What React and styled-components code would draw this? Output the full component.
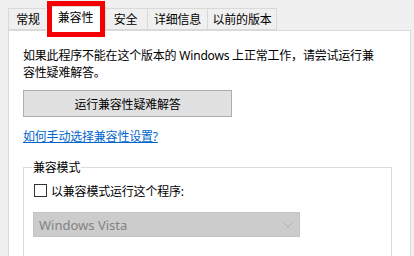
import React from "react";
import styled, { createGlobalStyle } from "styled-components";

const GlobalStyle = createGlobalStyle`
  body {
    margin: 0;
    background: #f0f0f0;
    font-family: "Noto Sans", "Noto Sans CJK SC", sans-serif;
    font-size: 12px;
    letter-spacing: -0.2px;
    color: #000;
  }
`;

const Window = styled.div`
  width: 414px;
  height: 256px;
  overflow: hidden;
  padding-top: 8px;
  box-sizing: border-box;
`;

const TabStrip = styled.div`
  display: flex;
  align-items: flex-end;
  height: 22px;
  margin-left: 8px;
`;

const Tab = styled.div`
  position: relative;
  box-sizing: border-box;
  width: ${(p) => p.w}px;
  height: ${(p) => (p.active ? 25 : 22)}px;
  margin: ${(p) => (p.active ? "0 -2px -1px" : "0")};
  z-index: ${(p) => (p.active ? 2 : 1)};
  display: flex;
  align-items: center;
  justify-content: center;
  padding-bottom: ${(p) => (p.active ? 4 : 0)}px;
  background: ${(p) => (p.active ? "#fff" : "#f0f0f0")};
  border: 1px solid #d9d9d9;
  border-bottom: ${(p) => (p.active ? "none" : "1px solid #d9d9d9")};
  & + & {
    border-left: ${(p) => (p.active ? "1px solid #d9d9d9" : "none")};
  }
`;

const Highlight = styled.span`
  position: absolute;
  left: 1px;
  right: 0;
  top: -6px;
  bottom: -6px;
  border: 5px solid #f40000;
`;

const Panel = styled.div`
  position: relative;
  z-index: 1;
  margin: 0 3px 0 8px;
  height: 240px;
  background: #fff;
  border: 1px solid #d9d9d9;
  padding: 16px 18px 0 14px;
`;

const Paragraph = styled.p`
  margin: 0;
  max-width: 358px;
  line-height: 17px;
`;

const Button = styled.div`
  margin-top: 9px;
  width: 209px;
  height: 27px;
  box-sizing: border-box;
  display: flex;
  align-items: center;
  justify-content: center;
  background: #e1e1e1;
  border: 1px solid #adadad;
`;

const Link = styled.a`
  display: inline-block;
  margin-top: 11px;
  line-height: 17px;
  color: #0066cc;
  text-decoration: underline;
`;

const Group = styled.fieldset`
  margin: 14px 0 0;
  padding: 6px 9px 30px;
  border: 1px solid #dcdcdc;
`;

const Legend = styled.legend`
  margin-left: -1px;
  padding: 0 1px;
  line-height: 17px;
`;

const CheckRow = styled.label`
  display: flex;
  align-items: center;
  gap: 4px;
  height: 17px;
  margin-left: 1px;
`;

const Box = styled.span`
  width: 13px;
  height: 13px;
  box-sizing: border-box;
  border: 1px solid #333;
  background: #fff;
`;

const Select = styled.div`
  margin-top: 13px;
  width: 267px;
  height: 25px;
  box-sizing: border-box;
  display: flex;
  align-items: center;
  justify-content: space-between;
  padding: 0 6px 0 5px;
  background: #cccccc;
  border: 1px solid #c4c4c4;
  color: #838383;
  font-size: 13px;
  letter-spacing: 0;
`;

const tabs = [
  { label: "常规", w: 40 },
  { label: "兼容性", w: 60, active: true },
  { label: "安全", w: 44 },
  { label: "详细信息", w: 60 },
  { label: "以前的版本", w: 69 },
];

export default function App() {
  return (
    <>
      <GlobalStyle />
      <Window>
        <TabStrip>
          {tabs.map((t) => (
            <Tab key={t.label} w={t.w} active={t.active}>
              {t.label}
              {t.active && <Highlight />}
            </Tab>
          ))}
        </TabStrip>
        <Panel>
          <Paragraph>
            如果此程序不能在这个版本的 Windows 上正常工作，请尝试运行兼容性疑难解答。
          </Paragraph>
          <Button>运行兼容性疑难解答</Button>
          <Link>如何手动选择兼容性设置?</Link>
          <Group>
            <Legend>兼容模式</Legend>
            <CheckRow>
              <Box />
              以兼容模式运行这个程序:
            </CheckRow>
            <Select>
              Windows Vista
              <svg width="10" height="6" viewBox="0 0 10 6">
                <path d="M1 1l4 4 4-4" fill="none" stroke="#b0b0b0" strokeWidth="1" />
              </svg>
            </Select>
          </Group>
        </Panel>
      </Window>
    </>
  );
}
